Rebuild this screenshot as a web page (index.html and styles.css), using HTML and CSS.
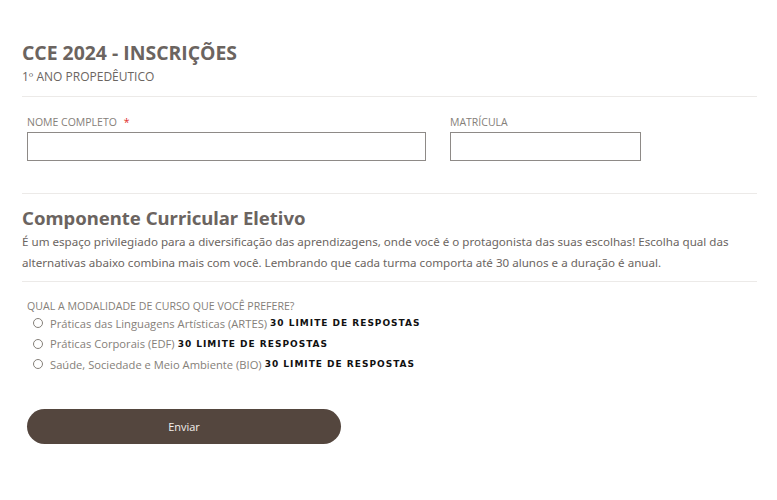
FILE: index.html
```html
<!DOCTYPE html>
<html lang="pt-BR">
<head>
<meta charset="utf-8">
<link rel="stylesheet" href="styles.css">
</head>
<body>
<form class="form">
  <header class="header">
    <h1 class="title">CCE 2024 - INSCRIÇÕES</h1>
    <p class="subtitle">1º ANO PROPEDÊUTICO</p>
  </header>
  <div class="fields">
    <div class="field field-name">
      <label class="label">NOME COMPLETO <span class="req">*</span></label>
      <div class="input"></div>
    </div>
    <div class="field field-mat">
      <label class="label">MATRÍCULA</label>
      <div class="input"></div>
    </div>
  </div>
  <section class="section">
    <h2 class="section-title">Componente Curricular Eletivo</h2>
    <p class="section-text">É um espaço privilegiado para a diversificação das aprendizagens, onde você é o protagonista das suas escolhas! Escolha qual das alternativas abaixo combina mais com você. Lembrando que cada turma comporta até 30 alunos e a duração é anual.</p>
  </section>
  <div class="question">
    <p class="q-label">QUAL A MODALIDADE DE CURSO QUE VOCÊ PREFERE?</p>
    <div class="option"><span class="radio"></span><span class="opt-text">Práticas das Linguagens Artísticas (ARTES)</span><span class="limit">30 LIMITE DE RESPOSTAS</span></div>
    <div class="option"><span class="radio"></span><span class="opt-text">Práticas Corporais (EDF)</span><span class="limit">30 LIMITE DE RESPOSTAS</span></div>
    <div class="option"><span class="radio"></span><span class="opt-text">Saúde, Sociedade e Meio Ambiente (BIO)</span><span class="limit">30 LIMITE DE RESPOSTAS</span></div>
  </div>
  <div class="actions">
    <button type="button" class="submit">Enviar</button>
  </div>
</form>
</body>
</html>
```
FILE: styles.css
```css
html, body {
  margin: 0;
  padding: 0;
  background: #ffffff;
}
body {
  font-family: "Open Sans", "Noto Sans", sans-serif;
  color: #6b6561;
}
.form {
  width: 735px;
  margin-left: 22px;
  padding-top: 40px;
}
.header {
  padding-bottom: 12px;
  border-bottom: 1px solid #eceae8;
}
.title {
  margin: 0;
  font-size: 19.4px;
  line-height: 25px;
  font-weight: 700;
  color: #6b6460;
}
.subtitle {
  margin: 4px 0 0 0;
  font-size: 12px;
  line-height: 15px;
  color: #6b6561;
}
.fields {
  display: flex;
  gap: 24px;
  padding: 18px 0 0 5px;
  height: 78px;
  border-bottom: 1px solid #eceae8;
}
.field {
  display: flex;
  flex-direction: column;
}
.field-name { width: 399px; }
.field-mat { width: 191px; }
.label {
  font-size: 10.5px;
  line-height: 14px;
  color: #858079;
  margin-bottom: 3px;
}
.req {
  color: #e0302a;
  margin-left: 4px;
}
.input {
  height: 27px;
  border: 1px solid #8e8a87;
  background: #fff;
}
.section {
  padding: 11px 0 8px;
  border-bottom: 1px solid #eceae8;
}
.section-title {
  margin: 0;
  font-family: "Noto Sans", "Open Sans", sans-serif;
  font-size: 18.5px;
  line-height: 26px;
  font-weight: 700;
  color: #6b6460;
}
.section-text {
  margin: 0;
  font-family: "Noto Sans", "Open Sans", sans-serif;
  font-size: 11.6px;
  line-height: 21px;
  color: #6b6561;
}
.question {
  padding: 18px 0 0 5px;
}
.q-label {
  margin: 0;
  font-size: 10.6px;
  line-height: 13px;
  color: #858079;
}
.option {
  display: flex;
  align-items: center;
  height: 20.5px;
  padding-left: 6px;
  font-size: 11.2px;
  color: #858079;
}
.radio {
  width: 8px;
  height: 8px;
  border: 1px solid #858079;
  border-radius: 50%;
  margin-right: 7px;
  flex: none;
}
.opt-text {
  white-space: nowrap;
}
.limit {
  margin-left: 3px;
  font-family: "DejaVu Sans", sans-serif;
  font-weight: 700;
  font-size: 9px;
  letter-spacing: 1px;
  color: #111;
  white-space: nowrap;
}
.actions {
  padding: 34px 0 0 5px;
}
.submit {
  width: 314px;
  height: 35px;
  border: none;
  border-radius: 18px;
  background: #54463e;
  color: #f3efec;
  font-family: "Open Sans", sans-serif;
  font-size: 11px;
  cursor: pointer;
}
```
